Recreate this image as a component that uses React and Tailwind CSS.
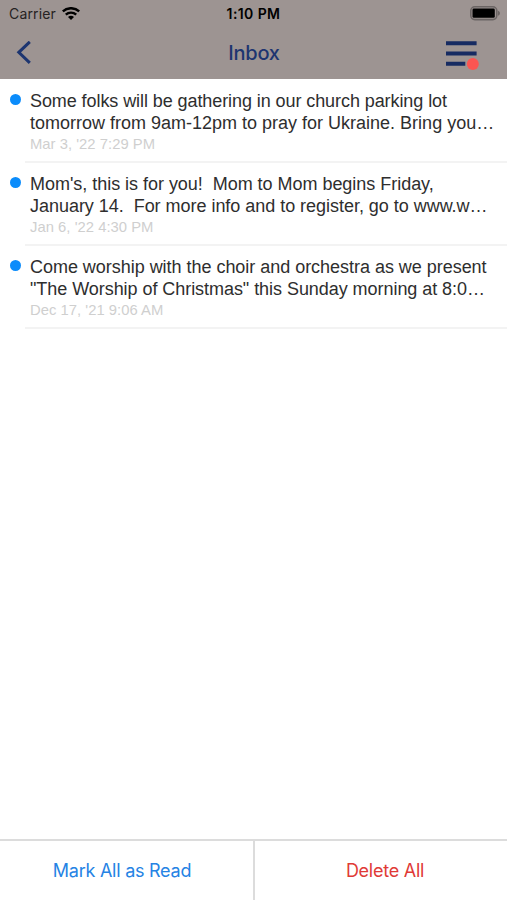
import React, { useState } from "react";

const initialMessages = [
  {
    id: 1,
    lines: [
      { text: "Some folks will be gathering in our church parking lot", tracking: "tracking-[-0.08px]" },
      { text: "tomorrow from 9am-12pm to pray for Ukraine. Bring you…", tracking: "tracking-[0px]" },
    ],
    date: "Mar 3, '22 7:29 PM",
  },
  {
    id: 2,
    lines: [
      { text: "Mom's, this is for you!  Mom to Mom begins Friday,", tracking: "tracking-[-0.03px]" },
      { text: "January 14.  For more info and to register, go to www.w…", tracking: "tracking-[-0.03px]" },
    ],
    date: "Jan 6, '22 4:30 PM",
  },
  {
    id: 3,
    lines: [
      { text: "Come worship with the choir and orchestra as we present", tracking: "tracking-[-0.03px]" },
      { text: "\"The Worship of Christmas\" this Sunday morning at 8:0…", tracking: "tracking-[-0.05px]" },
    ],
    date: "Dec 17, '21 9:06 AM",
  },
];

const WifiIcon = () => (
  <svg width="18" height="14" viewBox="0 0 18 14" fill="none" stroke="#000" strokeWidth="2.4">
    <path d="M0.8 4.4C5.3 0.1 12.7 0.1 17.2 4.4" />
    <path d="M3.8 7.6C6.7 4.9 11.3 4.9 14.2 7.6" />
    <path d="M9 13L6 10C7.7 8.4 10.3 8.4 12 10Z" fill="#000" stroke="none" />
  </svg>
);

const BatteryIcon = () => (
  <svg width="31" height="15" viewBox="0 0 31 15">
    <rect x="0.8" y="0.8" width="26" height="12.8" rx="4" fill="none" stroke="#6b6564" strokeWidth="1.6" />
    <rect x="2.5" y="2.6" width="22.3" height="9.2" rx="1.4" fill="#000" />
    <path d="M28 4.7C30.6 5.8 30.6 8.6 28 9.7Z" fill="#6b6564" />
  </svg>
);

const StatusBar = () => (
  <div className="grid h-[27px] grid-cols-3 items-center text-[14px]">
    <div className="flex items-center gap-1.5 pl-[9px] text-[#262222]">
      <span className="text-[14px] leading-[27px] tracking-[0.15px]">Carrier</span>
      <WifiIcon />
    </div>
    <div className="text-center font-semibold leading-[27px] tracking-[0.4px] text-black">1:10 PM</div>
    <div className="flex justify-end pr-[6px]">
      <BatteryIcon />
    </div>
  </div>
);

const NavBar = () => (
  <div className="grid h-[52px] grid-cols-3 items-center text-[#1d3570]">
    <button className="pl-[16px]">
      <svg width="16" height="24" viewBox="0 0 16 24" fill="none" stroke="currentColor" strokeWidth="3">
        <path d="M13.8 0.8L2.8 11.3L13.8 21.8" />
      </svg>
    </button>
    <div className="pl-px text-center text-[20px] font-medium tracking-[-0.25px]">Inbox</div>
    <button className="flex justify-end pr-[27px]">
      <svg width="34" height="33" viewBox="0 0 34 33">
        <path d="M0 6.2H30.6M0 16.4H30.6M0 26.7H19.3" stroke="#172b62" strokeWidth="4" />
        <circle cx="26.8" cy="27" r="6" fill="#fa5552" />
      </svg>
    </button>
  </div>
);

const App = () => {
  const [messages, setMessages] = useState(initialMessages);
  const [read, setRead] = useState(false);

  return (
    <div className="flex h-screen flex-col bg-white font-['Inter',sans-serif]">
      <header className="h-[79px] shrink-0 bg-[#9d9492]">
        <StatusBar />
        <NavBar />
      </header>

      <ul className="flex-1 overflow-hidden pt-px font-['Liberation_Sans',Arial,sans-serif]">
        {messages.map((m) => (
          <li key={m.id} className="flex h-[83px]">
            <div className="w-[25px] shrink-0 pl-[10px] pt-[13.5px]">
              {!read && <div className="size-[11px] rounded-full bg-[#0b8cfb]" />}
            </div>
            <div className="flex-1 border-b-2 border-[#f3f3f3] pl-[5px] pt-[11px]">
              {m.lines.map((l) => (
                <div key={l.text} className="h-[21.5px] whitespace-pre text-[18px] leading-[21.5px] text-[#2e2e2e]">
                  <span className={l.tracking}>{l.text}</span>
                </div>
              ))}
              <div className="text-[14.8px] leading-[20px] tracking-[0.03px] text-[#cfcfcf]">
                <span>{m.date}</span>
              </div>
            </div>
          </li>
        ))}
      </ul>

      <footer className="grid h-[61.5px] shrink-0 grid-cols-[255px_1fr] border-t-2 border-[#dcdcdc] text-[18px] tracking-[-0.25px]">
        <button className="border-r-2 border-[#dcdcdc] pr-[9px] text-[#2583e4]" onClick={() => setRead(true)}>
          Mark All as Read
        </button>
        <button className="pl-[8px] text-[#e03a36]" onClick={() => setMessages([])}>
          Delete All
        </button>
      </footer>
    </div>
  );
};

export default App;
